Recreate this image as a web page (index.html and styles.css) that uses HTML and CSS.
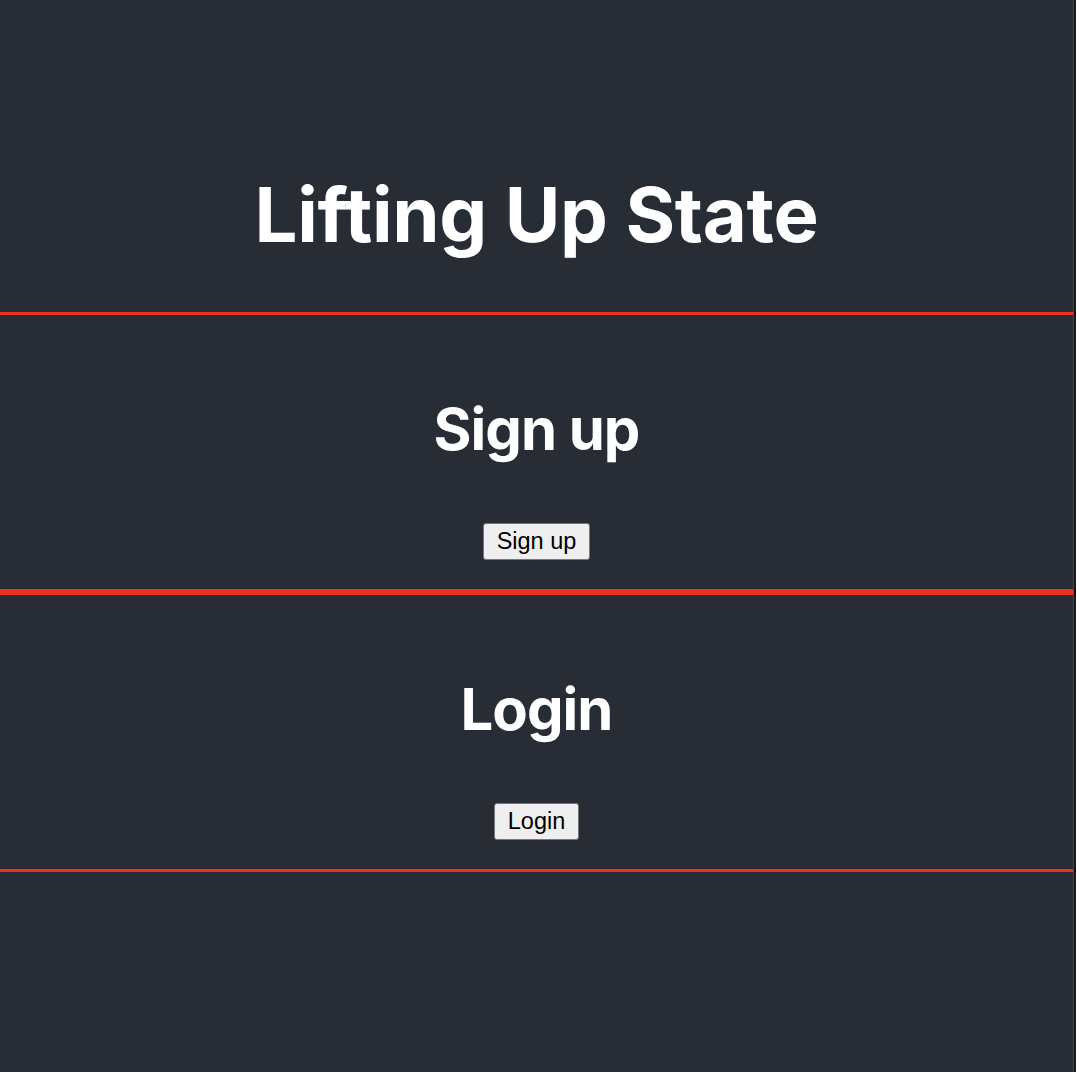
FILE: index.html
```html
<!DOCTYPE html>
<html lang="en">
<head>
<meta charset="utf-8">
<title>Lifting Up State</title>
<link rel="stylesheet" href="styles.css">
</head>
<body>
<div class="app">
  <header class="app-header">
    <h1 class="title">Lifting Up State</h1>
  </header>
  <section class="panel">
    <h2 class="panel-title">Sign up</h2>
    <button class="btn" type="button">Sign up</button>
  </section>
  <section class="panel">
    <h2 class="panel-title">Login</h2>
    <button class="btn" type="button">Login</button>
  </section>
</div>
</body>
</html>
```

FILE: styles.css
```css
html {
  background: #161719;
}
body {
  margin: 0;
}
.app {
  box-sizing: border-box;
  min-height: 100vh;
  margin-right: 2px;
  border-right: 1px solid #43464b;
  background: #282c34;
  color: #ffffff;
  font-family: Inter, "Noto Sans", sans-serif;
  text-align: center;
  display: flex;
  flex-direction: column;
}
.app-header {
  padding: 168px 0 52px;
}
.title {
  margin: 0;
  font-size: 76px;
  line-height: 92px;
  font-weight: 700;
  letter-spacing: -0.3px;
}
.panel {
  border-top: 3px solid #ea3323;
  border-bottom: 3px solid #ea3323;
  height: 280px;
  box-sizing: border-box;
  padding-top: 79px;
  display: flex;
  flex-direction: column;
  align-items: center;
}
.panel-title {
  margin: 0 0 59px;
  font-size: 58px;
  line-height: 70px;
  font-weight: 700;
  letter-spacing: -1px;
}
.btn {
  font-family: "Liberation Sans", Arial, sans-serif;
  font-size: 23.5px;
  line-height: 27px;
  padding: 4px 13px;
  border: 1px solid #767676;
  border-radius: 3px;
  background: #efefef;
  color: #000000;
}
```
